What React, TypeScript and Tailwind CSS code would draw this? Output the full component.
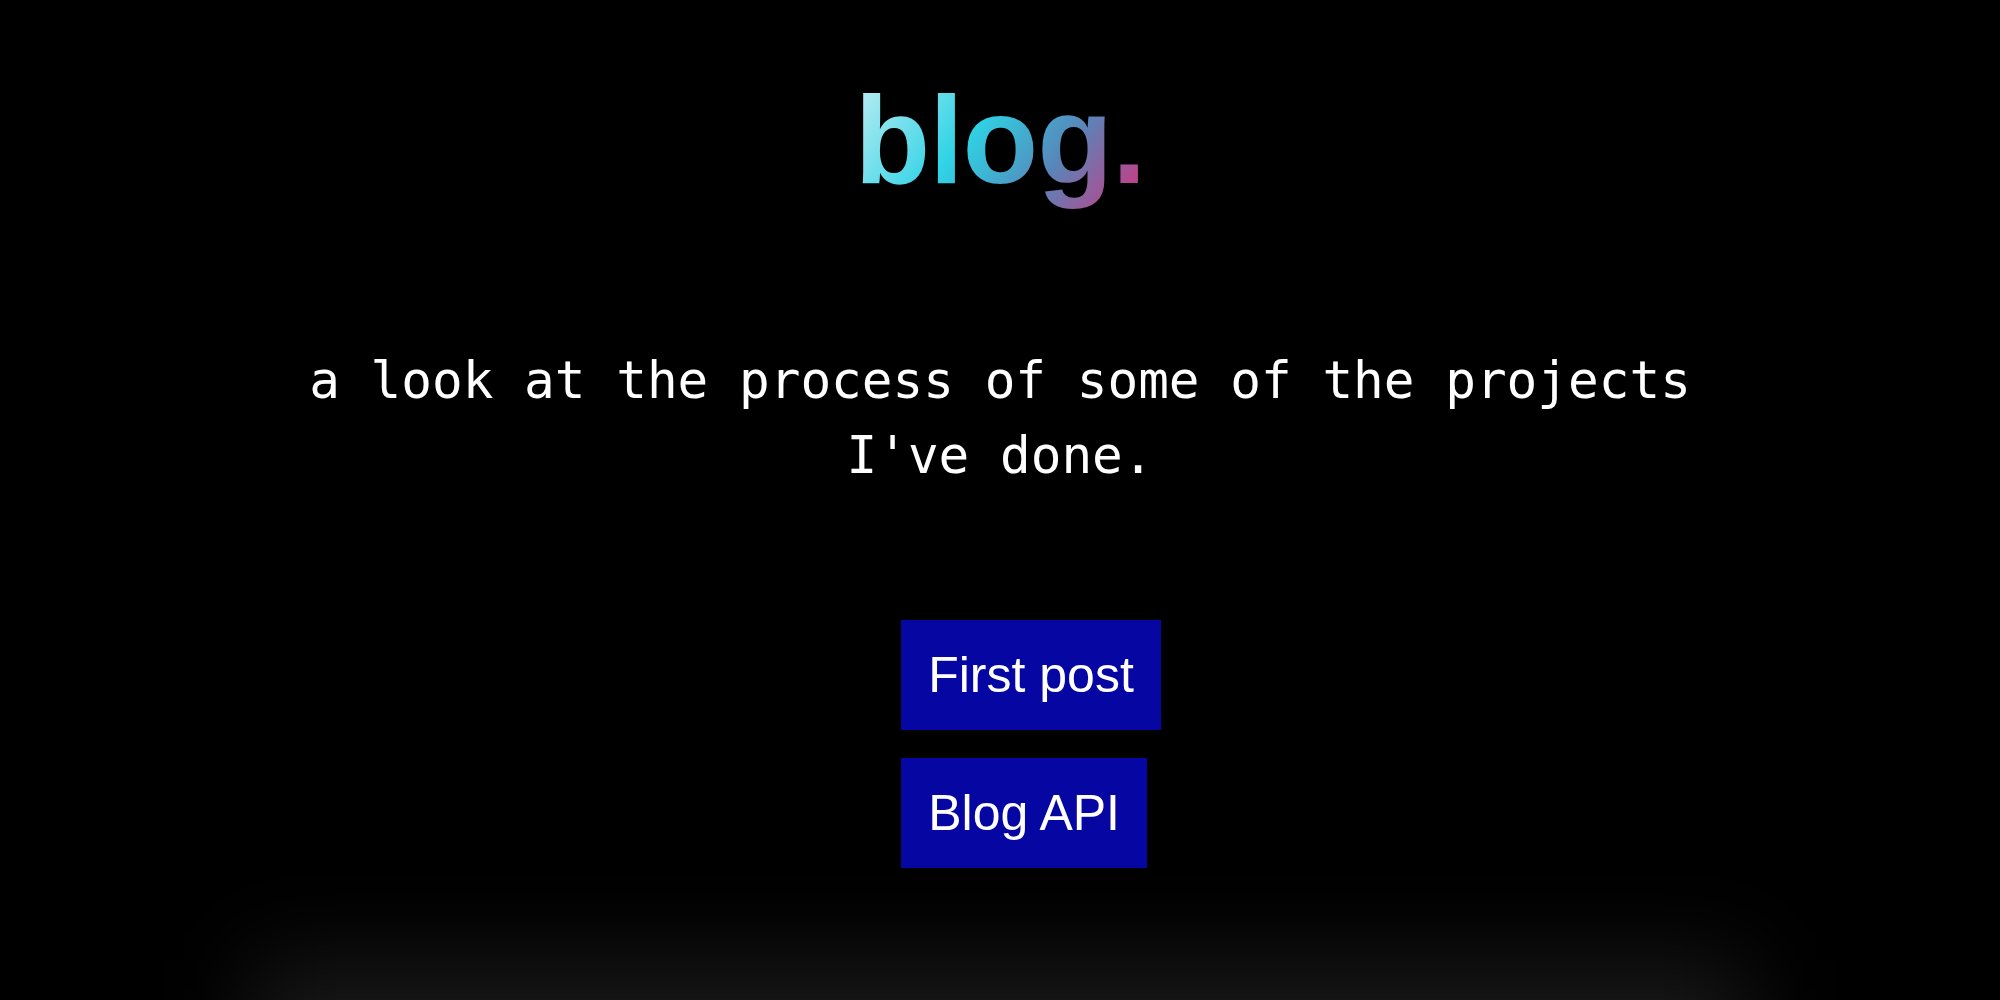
export default function App() {
  const posts = ["First post", "Blog API"];

  return (
    <div className="relative min-h-[1000px] w-full overflow-hidden bg-black">
      {/* soft grey glow at the bottom edge */}
      <div
        aria-hidden="true"
        className="pointer-events-none absolute left-[250px] right-[250px] top-[960px] h-[220px] bg-[#181818] blur-[45px]"
      />

      <main className="relative flex flex-col items-center pt-[78px]">
        <h1 className="bg-[linear-gradient(125deg,#c4eef3_0%,#2fd3e6_38%,#3bb9d6_48%,#5a84b8_66%,#b8468c_88%,#c83e84_100%)] bg-clip-text pb-[30px] font-['Liberation_Sans',Arial,sans-serif] text-[124px] font-bold leading-none tracking-[-1px] text-transparent">
          blog.
        </h1>

        <p className="mt-[111px] w-[1460px] text-center font-['DejaVu_Sans_Mono','Liberation_Mono',monospace] text-[51px] leading-[75px] text-white">
          a look at the process of some of the projects I've done.
        </p>

        <div className="mt-[127px] flex flex-col items-start gap-[28px] pl-[62px]">
          {posts.map((title) => (
            <a
              key={title}
              href="#"
              className="flex h-[110px] items-center bg-[#0606a2] px-[27px] font-['Liberation_Sans',Arial,sans-serif] text-[50px] leading-none text-white"
            >
              {title}
            </a>
          ))}
        </div>
      </main>
    </div>
  );
}
